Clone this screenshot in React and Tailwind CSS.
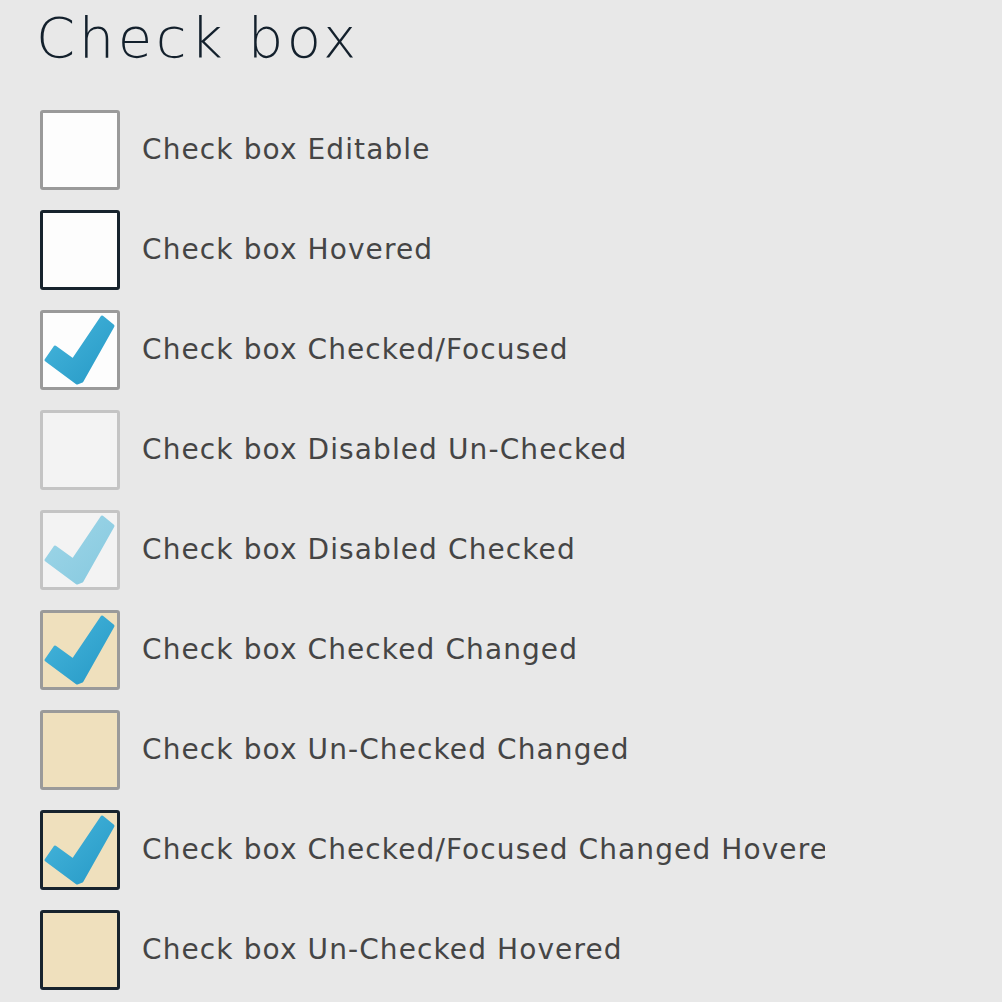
import React from "react";

const rows = [
	{ label: "Check box Editable", box: "border-[#9a9a9a] bg-[#fdfdfd]" },
	{ label: "Check box Hovered", box: "border-[#17232d] bg-[#fdfdfd]" },
	{ label: "Check box Checked/Focused", box: "border-[#9a9a9a] bg-[#fdfdfd]", check: "on" },
	{ label: "Check box Disabled Un-Checked", box: "border-[#c4c4c4] bg-[#f3f3f3]" },
	{ label: "Check box Disabled Checked", box: "border-[#c4c4c4] bg-[#f3f3f3]", check: "off" },
	{ label: "Check box Checked Changed", box: "border-[#9a9a9a] bg-[#efe0bd]", check: "on" },
	{ label: "Check box Un-Checked Changed", box: "border-[#9a9a9a] bg-[#efe0bd]" },
	{ label: "Check box Checked/Focused Changed Hovered", box: "border-[#17232d] bg-[#efe0bd]", check: "on" },
	{ label: "Check box Un-Checked Hovered", box: "border-[#17232d] bg-[#efe0bd]" },
];

function Tick({ faded }) {
	const id = faded ? "tickFaded" : "tickOn";
	return (
		<svg viewBox="0 0 74 74" className="w-[74px] h-[74px]">
			<defs>
				<linearGradient id={id} x1="0" y1="0" x2="1" y2="1">
					<stop offset="0" stopColor={faded ? "#9fd6e8" : "#47b6dc"} />
					<stop offset="1" stopColor={faded ? "#86c9df" : "#2699c6"} />
				</linearGradient>
			</defs>
			<path
				d="M12 34 L3 47 L34 70 L39 68 L70 13 L59 4 L30 47 Z"
				fill={`url(#${id})`}
				stroke={`url(#${id})`}
				strokeWidth="3"
				strokeLinejoin="round"
			/>
		</svg>
	);
}

export default function App() {
	return (
		<div
			className="w-[1002px] h-[1002px] bg-[#e8e8e8] overflow-hidden"
			style={{ fontFamily: "'DejaVu Sans', 'Liberation Sans', sans-serif" }}
		>
			<h1 className="pl-[36px] pt-[2px] h-[110px] text-[56px] leading-[72px] tracking-[3.6px] text-[#13202c] font-light">
				Check box
			</h1>
			<div className="flex flex-col gap-[20px] pl-[40px]">
				{rows.map((r) => (
					<div key={r.label} className="flex items-center h-[80px]">
						<div
							className={`w-[80px] h-[80px] shrink-0 border-[3px] rounded-[3px] flex items-center justify-center ${r.box}`}
						>
							{r.check && <Tick faded={r.check === "off"} />}
						</div>
						{/* label column is clipped, long labels get cut */}
						<div className="ml-[22px] w-[683px] overflow-hidden whitespace-nowrap text-[28px] tracking-[1.1px] text-[#454545]">
							{r.label}
						</div>
					</div>
				))}
			</div>
		</div>
	);
}
